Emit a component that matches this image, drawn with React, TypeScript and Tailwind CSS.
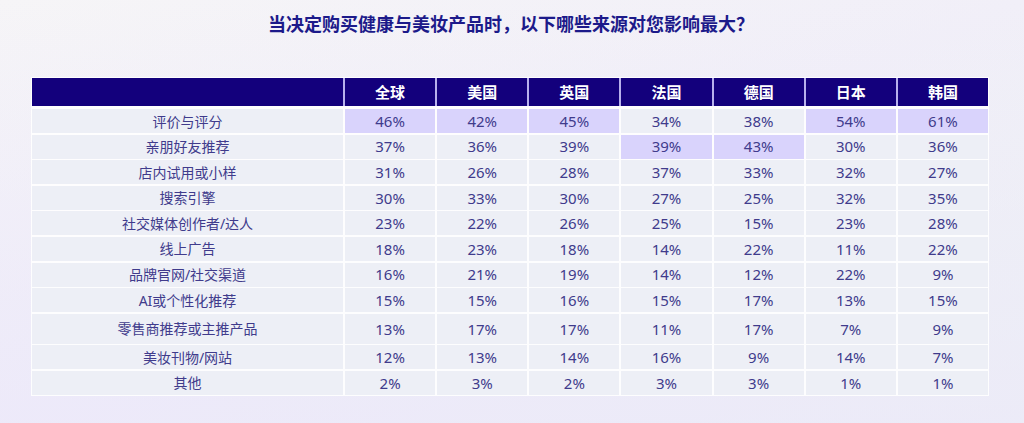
import { Fragment } from "react";

const columns = ["全球", "美国", "英国", "法国", "德国", "日本", "韩国"];

type Row = { label: string; values: string[]; hot: number[]; tall?: boolean };

const rows: Row[] = [
  { label: "评价与评分", values: ["46%", "42%", "45%", "34%", "38%", "54%", "61%"], hot: [0, 1, 2, 5, 6] },
  { label: "亲朋好友推荐", values: ["37%", "36%", "39%", "39%", "43%", "30%", "36%"], hot: [3, 4] },
  { label: "店内试用或小样", values: ["31%", "26%", "28%", "37%", "33%", "32%", "27%"], hot: [] },
  { label: "搜索引擎", values: ["30%", "33%", "30%", "27%", "25%", "32%", "35%"], hot: [] },
  { label: "社交媒体创作者/达人", values: ["23%", "22%", "26%", "25%", "15%", "23%", "28%"], hot: [] },
  { label: "线上广告", values: ["18%", "23%", "18%", "14%", "22%", "11%", "22%"], hot: [] },
  { label: "品牌官网/社交渠道", values: ["16%", "21%", "19%", "14%", "12%", "22%", "9%"], hot: [] },
  { label: "AI或个性化推荐", values: ["15%", "15%", "16%", "15%", "17%", "13%", "15%"], hot: [] },
  { label: "零售商推荐或主推产品", values: ["13%", "17%", "17%", "11%", "17%", "7%", "9%"], hot: [], tall: true },
  { label: "美妆刊物/网站", values: ["12%", "13%", "14%", "16%", "9%", "14%", "7%"], hot: [] },
  { label: "其他", values: ["2%", "3%", "2%", "3%", "3%", "1%", "1%"], hot: [] },
];

export default function App() {
  return (
    <div
      className="w-[1024px] h-[423px] overflow-hidden bg-gradient-to-br from-[#f6f5f7] via-[#f1eff8] to-[#eef4f2]"
      style={{ fontFamily: '"Noto Sans", "Noto Sans CJK SC", sans-serif' }}
    >
      <div className="h-full bg-gradient-to-t from-[#ebe7fa]/70 to-transparent">
        <h1 className="pt-[13px] pl-[268px] text-[18px] leading-[22px] font-bold text-[#1c1a8a]">
          当决定购买健康与美妆产品时，以下哪些来源对您影响最大？
        </h1>

        {/* Table */}
        <div className="ml-[31px] mt-[42px] w-[958px] bg-white/90 p-[1px]">
          <div className="grid grid-cols-[311px_repeat(7,minmax(0,1fr))] gap-x-[2px] bg-[#b7b0ec]">
            <div className="h-[28px] bg-[#13007c]" />
            {columns.map((c) => (
              <div
                key={c}
                className="h-[28px] bg-[#13007c] flex items-center justify-center text-white font-bold text-[15px]"
              >
                {c}
              </div>
            ))}
          </div>
          <div className="mt-[3px] grid grid-cols-[311px_repeat(7,minmax(0,1fr))] gap-x-[2px] gap-y-[1.6px]">
            {rows.map((r) => (
              <Fragment key={r.label}>
                <div
                  className={`${r.tall ? "h-[30px]" : "h-[24px]"} bg-[#edeff6] flex items-center justify-center text-[14px] text-[#403b8c]`}
                >
                  {r.label}
                </div>
                {r.values.map((v, i) => (
                  <div
                    key={i}
                    className={`${r.tall ? "h-[30px]" : "h-[24px]"} ${
                      r.hot.includes(i) ? "bg-[#d9d3fc]" : "bg-[#edeff6]"
                    } flex items-center justify-center text-[15px] text-[#403b8c]`}
                  >
                    {v}
                  </div>
                ))}
              </Fragment>
            ))}
          </div>
        </div>
      </div>
    </div>
  );
}
